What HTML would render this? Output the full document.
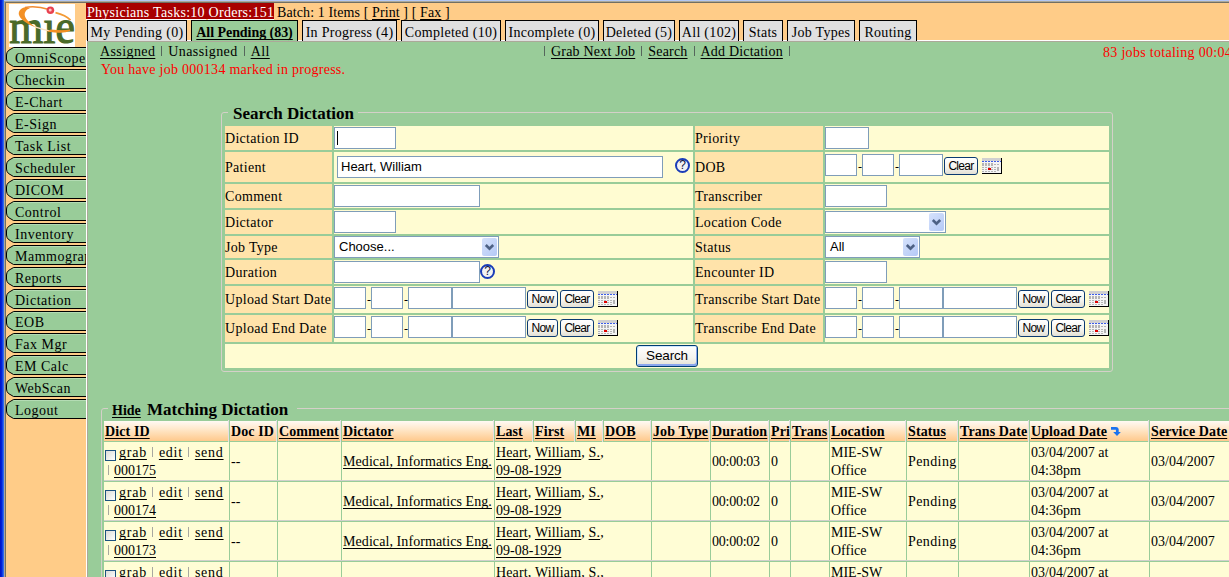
<!DOCTYPE html><html><head><meta charset="utf-8"><style>
html,body{margin:0;padding:0}
body{width:1229px;height:577px;overflow:hidden;position:relative;background:#99CC99;font-family:"Liberation Serif",serif;font-size:14px;color:#000}
body div{position:absolute;box-sizing:border-box}
.t{white-space:nowrap;line-height:18px}
u{text-decoration:underline;text-underline-offset:2px;text-decoration-skip-ink:none}
.sep{display:inline-block;width:1px;height:10px;background:#56665C;vertical-align:0px;margin:0 6px}
.inp{background:#fff;border:1px solid #7F9DB9}
.btn{border:1px solid #0B3A72;border-radius:3px;background:linear-gradient(#FFFFFF 0%,#F4F3EE 60%,#E3E0D4 100%);font-family:"Liberation Sans",sans-serif;font-size:12px;letter-spacing:-0.7px;text-align:center;line-height:16px;color:#000}
.sel{background:#fff;border:1px solid #7F9DB9;font-family:"Liberation Sans",sans-serif;font-size:13px;line-height:20px;padding-left:4px}
.arr{top:1px;right:1px;width:15px;height:18px;border-radius:2px;background:linear-gradient(135deg,#D6E2FC,#B4C9F6)}
.help{width:15px;height:15px;border:2px solid #1B3DB8;border-radius:50%;background:#F2F2F2;font-family:"Liberation Sans",sans-serif;font-size:12px;line-height:11px;text-align:center;color:#0c1440;font-weight:normal}
.lbl{background:#FFE3AA}
.val{background:#FFFCD2}
</style></head><body>
<div style="left:0px;top:0px;width:4px;height:577px;background:linear-gradient(90deg,#0010C4 0%,#0024DC 45%,#3C7EF6 100%)"></div>
<div style="left:4px;top:0px;width:1225px;height:1px;background:#B4C8F4"></div>
<div style="left:4px;top:1px;width:1225px;height:1px;background:#ACA899"></div>
<div style="left:4px;top:1px;width:1px;height:576px;background:#ACA899"></div>
<div style="left:5px;top:2px;width:1224px;height:1px;background:#716F64"></div>
<div style="left:5px;top:2px;width:1px;height:575px;background:#716F64"></div>
<div style="left:6px;top:3px;width:80px;height:574px;background:#FFCC88"></div>
<div style="left:86px;top:3px;width:1143px;height:37px;background:#FFCC88"></div>
<div style="left:86px;top:40px;width:1143px;height:1px;background:#fff"></div>
<div style="left:86px;top:40px;width:1px;height:537px;background:#fff"></div>
<div style="left:87px;top:41px;width:1142px;height:1px;background:#ACA899"></div>
<div style="left:87px;top:41px;width:1px;height:536px;background:#ACA899"></div>
<div style="left:9px;top:4px;width:66px;height:43px;background:#fff;overflow:hidden">
<svg width="66" height="43" viewBox="0 0 66 43">
<text x="0.3" y="39.2" font-family="Liberation Serif" font-size="48" fill="#4A6A28" stroke="#4A6A28" stroke-width="1.2" textLength="65.5" lengthAdjust="spacingAndGlyphs">m&#305;e</text>
<path d="M16 3.2 C11 4.5 8.8 8 10.2 11.5 C12 16 18 20 26.5 23.2 C21.5 19.5 16.5 15.5 15.8 11.5 C15.3 8 17.5 5.2 21 4.2 Z" fill="#F39025"/>
<path d="M16 3.4 C24 2 33 3.2 40 5.5" fill="none" stroke="#F08A30" stroke-width="1.5"/>
<path d="M26 22.8 C32 25 38 26.6 44 27.6" fill="none" stroke="#FBE0C0" stroke-width="1.4"/>
<path d="M40 27.2 C48 28.6 56 28.8 61 26.2 C56 27 48 26.8 42 26.2 Z" fill="#F39025" stroke="#F39025" stroke-width="1.2"/>
<path d="M46.5 8.6 C52 10 58 12.5 61.5 16.2" fill="none" stroke="#F39A35" stroke-width="1.8"/>
<circle cx="41.4" cy="6.3" r="3.8" fill="#E8414F"/>
<circle cx="41.2" cy="6.1" r="1.5" fill="#FFC8C8"/>
</svg></div>
<div style="left:86px;top:3px;width:188px;height:16px;background:#A80000"></div>
<div class="t" style="left:87px;top:4px;"><span style="color:#fff;letter-spacing:0.27px">Physicians Tasks:10 Orders:151</span></div>
<div style="left:86px;top:19px;width:120px;height:1px;background:#fff"></div>
<div style="left:208px;top:19px;width:66px;height:1px;background:#fff"></div>
<div class="t" style="left:277px;top:4px;letter-spacing:0.1px">Batch: 1 Items [ <u>Print</u> ] [ <u>Fax</u> ]</div>
<div style="left:87px;top:20px;width:100px;height:21px;background:#E0E0E0;border:1px solid #000;border-bottom:none;overflow:hidden"><div class="t" style="left:0;width:100%;text-align:center;top:3px;letter-spacing:0.3px">My Pending (0)</div></div>
<div style="left:191px;top:20px;width:107px;height:21px;background:#99CC99;border:1px solid #000;border-bottom:none;overflow:hidden"><div class="t" style="left:0;width:100%;text-align:center;top:3px;letter-spacing:0.3px"><b style="letter-spacing:-0.05px"><u>All Pending (83)</u></b></div></div>
<div style="left:302px;top:20px;width:95px;height:21px;background:#E0E0E0;border:1px solid #000;border-bottom:none;overflow:hidden"><div class="t" style="left:0;width:100%;text-align:center;top:3px;letter-spacing:0.3px">In Progress (4)</div></div>
<div style="left:401px;top:20px;width:100px;height:21px;background:#E0E0E0;border:1px solid #000;border-bottom:none;overflow:hidden"><div class="t" style="left:0;width:100%;text-align:center;top:3px;letter-spacing:0.3px">Completed (10)</div></div>
<div style="left:505px;top:20px;width:94px;height:21px;background:#E0E0E0;border:1px solid #000;border-bottom:none;overflow:hidden"><div class="t" style="left:0;width:100%;text-align:center;top:3px;letter-spacing:0.3px">Incomplete (0)</div></div>
<div style="left:603px;top:20px;width:72px;height:21px;background:#E0E0E0;border:1px solid #000;border-bottom:none;overflow:hidden"><div class="t" style="left:0;width:100%;text-align:center;top:3px;letter-spacing:0.3px">Deleted (5)</div></div>
<div style="left:679px;top:20px;width:60px;height:21px;background:#E0E0E0;border:1px solid #000;border-bottom:none;overflow:hidden"><div class="t" style="left:0;width:100%;text-align:center;top:3px;letter-spacing:0.3px">All (102)</div></div>
<div style="left:743px;top:20px;width:40px;height:21px;background:#E0E0E0;border:1px solid #000;border-bottom:none;overflow:hidden"><div class="t" style="left:0;width:100%;text-align:center;top:3px;letter-spacing:0.3px">Stats</div></div>
<div style="left:787px;top:20px;width:68px;height:21px;background:#E0E0E0;border:1px solid #000;border-bottom:none;overflow:hidden"><div class="t" style="left:0;width:100%;text-align:center;top:3px;letter-spacing:0.3px">Job Types</div></div>
<div style="left:859px;top:20px;width:58px;height:21px;background:#E0E0E0;border:1px solid #000;border-bottom:none;overflow:hidden"><div class="t" style="left:0;width:100%;text-align:center;top:3px;letter-spacing:0.3px">Routing</div></div>
<div style="left:6px;top:47px;width:80px;height:20px;overflow:hidden"><svg width="80" height="20" style="position:absolute;left:0;top:0"><path d="M80 0.5 H7.5 L2.5 3.5 Q0.5 5.5 0.5 8 V12 Q0.5 14.5 2.5 16.5 L7.5 19.5 H80" fill="#99CC99" stroke="#000" stroke-width="1"/><path d="M8 1.5 H80" stroke="#B4DCB4" stroke-width="1"/></svg><div class="t" style="left:9px;top:3px;letter-spacing:0.5px">OmniScope</div></div>
<div style="left:6px;top:69px;width:80px;height:20px;overflow:hidden"><svg width="80" height="20" style="position:absolute;left:0;top:0"><path d="M80 0.5 H7.5 L2.5 3.5 Q0.5 5.5 0.5 8 V12 Q0.5 14.5 2.5 16.5 L7.5 19.5 H80" fill="#99CC99" stroke="#000" stroke-width="1"/><path d="M8 1.5 H80" stroke="#B4DCB4" stroke-width="1"/></svg><div class="t" style="left:9px;top:3px;letter-spacing:0.5px">Checkin</div></div>
<div style="left:6px;top:91px;width:80px;height:20px;overflow:hidden"><svg width="80" height="20" style="position:absolute;left:0;top:0"><path d="M80 0.5 H7.5 L2.5 3.5 Q0.5 5.5 0.5 8 V12 Q0.5 14.5 2.5 16.5 L7.5 19.5 H80" fill="#99CC99" stroke="#000" stroke-width="1"/><path d="M8 1.5 H80" stroke="#B4DCB4" stroke-width="1"/></svg><div class="t" style="left:9px;top:3px;letter-spacing:0.5px">E-Chart</div></div>
<div style="left:6px;top:113px;width:80px;height:20px;overflow:hidden"><svg width="80" height="20" style="position:absolute;left:0;top:0"><path d="M80 0.5 H7.5 L2.5 3.5 Q0.5 5.5 0.5 8 V12 Q0.5 14.5 2.5 16.5 L7.5 19.5 H80" fill="#99CC99" stroke="#000" stroke-width="1"/><path d="M8 1.5 H80" stroke="#B4DCB4" stroke-width="1"/></svg><div class="t" style="left:9px;top:3px;letter-spacing:0.5px">E-Sign</div></div>
<div style="left:6px;top:135px;width:80px;height:20px;overflow:hidden"><svg width="80" height="20" style="position:absolute;left:0;top:0"><path d="M80 0.5 H7.5 L2.5 3.5 Q0.5 5.5 0.5 8 V12 Q0.5 14.5 2.5 16.5 L7.5 19.5 H80" fill="#99CC99" stroke="#000" stroke-width="1"/><path d="M8 1.5 H80" stroke="#B4DCB4" stroke-width="1"/></svg><div class="t" style="left:9px;top:3px;letter-spacing:0.5px">Task List</div></div>
<div style="left:6px;top:157px;width:80px;height:20px;overflow:hidden"><svg width="80" height="20" style="position:absolute;left:0;top:0"><path d="M80 0.5 H7.5 L2.5 3.5 Q0.5 5.5 0.5 8 V12 Q0.5 14.5 2.5 16.5 L7.5 19.5 H80" fill="#99CC99" stroke="#000" stroke-width="1"/><path d="M8 1.5 H80" stroke="#B4DCB4" stroke-width="1"/></svg><div class="t" style="left:9px;top:3px;letter-spacing:0.5px">Scheduler</div></div>
<div style="left:6px;top:179px;width:80px;height:20px;overflow:hidden"><svg width="80" height="20" style="position:absolute;left:0;top:0"><path d="M80 0.5 H7.5 L2.5 3.5 Q0.5 5.5 0.5 8 V12 Q0.5 14.5 2.5 16.5 L7.5 19.5 H80" fill="#99CC99" stroke="#000" stroke-width="1"/><path d="M8 1.5 H80" stroke="#B4DCB4" stroke-width="1"/></svg><div class="t" style="left:9px;top:3px;letter-spacing:0.5px">DICOM</div></div>
<div style="left:6px;top:201px;width:80px;height:20px;overflow:hidden"><svg width="80" height="20" style="position:absolute;left:0;top:0"><path d="M80 0.5 H7.5 L2.5 3.5 Q0.5 5.5 0.5 8 V12 Q0.5 14.5 2.5 16.5 L7.5 19.5 H80" fill="#99CC99" stroke="#000" stroke-width="1"/><path d="M8 1.5 H80" stroke="#B4DCB4" stroke-width="1"/></svg><div class="t" style="left:9px;top:3px;letter-spacing:0.5px">Control</div></div>
<div style="left:6px;top:223px;width:80px;height:20px;overflow:hidden"><svg width="80" height="20" style="position:absolute;left:0;top:0"><path d="M80 0.5 H7.5 L2.5 3.5 Q0.5 5.5 0.5 8 V12 Q0.5 14.5 2.5 16.5 L7.5 19.5 H80" fill="#99CC99" stroke="#000" stroke-width="1"/><path d="M8 1.5 H80" stroke="#B4DCB4" stroke-width="1"/></svg><div class="t" style="left:9px;top:3px;letter-spacing:0.5px">Inventory</div></div>
<div style="left:6px;top:245px;width:80px;height:20px;overflow:hidden"><svg width="80" height="20" style="position:absolute;left:0;top:0"><path d="M80 0.5 H7.5 L2.5 3.5 Q0.5 5.5 0.5 8 V12 Q0.5 14.5 2.5 16.5 L7.5 19.5 H80" fill="#99CC99" stroke="#000" stroke-width="1"/><path d="M8 1.5 H80" stroke="#B4DCB4" stroke-width="1"/></svg><div class="t" style="left:9px;top:3px;letter-spacing:0.5px">Mammography</div></div>
<div style="left:6px;top:267px;width:80px;height:20px;overflow:hidden"><svg width="80" height="20" style="position:absolute;left:0;top:0"><path d="M80 0.5 H7.5 L2.5 3.5 Q0.5 5.5 0.5 8 V12 Q0.5 14.5 2.5 16.5 L7.5 19.5 H80" fill="#99CC99" stroke="#000" stroke-width="1"/><path d="M8 1.5 H80" stroke="#B4DCB4" stroke-width="1"/></svg><div class="t" style="left:9px;top:3px;letter-spacing:0.5px">Reports</div></div>
<div style="left:6px;top:289px;width:80px;height:20px;overflow:hidden"><svg width="80" height="20" style="position:absolute;left:0;top:0"><path d="M80 0.5 H7.5 L2.5 3.5 Q0.5 5.5 0.5 8 V12 Q0.5 14.5 2.5 16.5 L7.5 19.5 H80" fill="#99CC99" stroke="#000" stroke-width="1"/><path d="M8 1.5 H80" stroke="#B4DCB4" stroke-width="1"/></svg><div class="t" style="left:9px;top:3px;letter-spacing:0.5px">Dictation</div></div>
<div style="left:6px;top:311px;width:80px;height:20px;overflow:hidden"><svg width="80" height="20" style="position:absolute;left:0;top:0"><path d="M80 0.5 H7.5 L2.5 3.5 Q0.5 5.5 0.5 8 V12 Q0.5 14.5 2.5 16.5 L7.5 19.5 H80" fill="#99CC99" stroke="#000" stroke-width="1"/><path d="M8 1.5 H80" stroke="#B4DCB4" stroke-width="1"/></svg><div class="t" style="left:9px;top:3px;letter-spacing:0.5px">EOB</div></div>
<div style="left:6px;top:333px;width:80px;height:20px;overflow:hidden"><svg width="80" height="20" style="position:absolute;left:0;top:0"><path d="M80 0.5 H7.5 L2.5 3.5 Q0.5 5.5 0.5 8 V12 Q0.5 14.5 2.5 16.5 L7.5 19.5 H80" fill="#99CC99" stroke="#000" stroke-width="1"/><path d="M8 1.5 H80" stroke="#B4DCB4" stroke-width="1"/></svg><div class="t" style="left:9px;top:3px;letter-spacing:0.5px">Fax Mgr</div></div>
<div style="left:6px;top:355px;width:80px;height:20px;overflow:hidden"><svg width="80" height="20" style="position:absolute;left:0;top:0"><path d="M80 0.5 H7.5 L2.5 3.5 Q0.5 5.5 0.5 8 V12 Q0.5 14.5 2.5 16.5 L7.5 19.5 H80" fill="#99CC99" stroke="#000" stroke-width="1"/><path d="M8 1.5 H80" stroke="#B4DCB4" stroke-width="1"/></svg><div class="t" style="left:9px;top:3px;letter-spacing:0.5px">EM Calc</div></div>
<div style="left:6px;top:377px;width:80px;height:20px;overflow:hidden"><svg width="80" height="20" style="position:absolute;left:0;top:0"><path d="M80 0.5 H7.5 L2.5 3.5 Q0.5 5.5 0.5 8 V12 Q0.5 14.5 2.5 16.5 L7.5 19.5 H80" fill="#99CC99" stroke="#000" stroke-width="1"/><path d="M8 1.5 H80" stroke="#B4DCB4" stroke-width="1"/></svg><div class="t" style="left:9px;top:3px;letter-spacing:0.5px">WebScan</div></div>
<div style="left:6px;top:399px;width:80px;height:20px;overflow:hidden"><svg width="80" height="20" style="position:absolute;left:0;top:0"><path d="M80 0.5 H7.5 L2.5 3.5 Q0.5 5.5 0.5 8 V12 Q0.5 14.5 2.5 16.5 L7.5 19.5 H80" fill="#99CC99" stroke="#000" stroke-width="1"/><path d="M8 1.5 H80" stroke="#B4DCB4" stroke-width="1"/></svg><div class="t" style="left:9px;top:3px;letter-spacing:0.5px">Logout</div></div>
<div style="left:86px;top:42px;width:1px;height:535px;background:#fff"></div>
<div class="t" style="left:100px;top:43px;letter-spacing:0.4px"><u>Assigned</u><span class="sep"></span>Unassigned<span class="sep"></span><u>All</u></div>
<div class="t" style="left:101px;top:61px;color:#FF0000;letter-spacing:0.27px">You have job 000134 marked in progress.</div>
<div class="t" style="left:544px;top:43px;letter-spacing:0.2px"><span class="sep" style="margin-left:0"></span><u>Grab Next Job</u><span class="sep"></span><u>Search</u><span class="sep"></span><u>Add Dictation</u><span class="sep"></span></div>
<div class="t" style="left:1103px;top:44px;color:#FF0000;letter-spacing:0.3px">83 jobs totaling 00:04:41</div>
<div style="left:221px;top:112px;width:892px;height:260px;border:1px solid #D4D0C8;border-radius:3px"></div>
<div style="left:228px;top:104px;width:130px;height:18px;background:#99CC99"></div>
<div class="t" style="left:233px;top:104px;font-size:17px;line-height:20px"><b>Search Dictation</b></div>
<div class="lbl" style="left:225px;top:126px;width:107px;height:24px"></div>
<div class="val" style="left:334px;top:126px;width:359px;height:24px"></div>
<div class="lbl" style="left:695px;top:126px;width:128px;height:24px"></div>
<div class="val" style="left:825px;top:126px;width:284px;height:24px"></div>
<div class="t" style="left:225px;top:130px;letter-spacing:0.3px">Dictation ID</div>
<div class="t" style="left:695px;top:130px;letter-spacing:0.3px">Priority</div>
<div class="lbl" style="left:225px;top:152px;width:107px;height:30px"></div>
<div class="val" style="left:334px;top:152px;width:359px;height:30px"></div>
<div class="lbl" style="left:695px;top:152px;width:128px;height:30px"></div>
<div class="val" style="left:825px;top:152px;width:284px;height:30px"></div>
<div class="t" style="left:225px;top:159px;letter-spacing:0.3px">Patient</div>
<div class="t" style="left:695px;top:159px;letter-spacing:0.3px">DOB</div>
<div class="lbl" style="left:225px;top:184px;width:107px;height:24px"></div>
<div class="val" style="left:334px;top:184px;width:359px;height:24px"></div>
<div class="lbl" style="left:695px;top:184px;width:128px;height:24px"></div>
<div class="val" style="left:825px;top:184px;width:284px;height:24px"></div>
<div class="t" style="left:225px;top:188px;letter-spacing:0.3px">Comment</div>
<div class="t" style="left:695px;top:188px;letter-spacing:0.3px">Transcriber</div>
<div class="lbl" style="left:225px;top:210px;width:107px;height:24px"></div>
<div class="val" style="left:334px;top:210px;width:359px;height:24px"></div>
<div class="lbl" style="left:695px;top:210px;width:128px;height:24px"></div>
<div class="val" style="left:825px;top:210px;width:284px;height:24px"></div>
<div class="t" style="left:225px;top:214px;letter-spacing:0.3px">Dictator</div>
<div class="t" style="left:695px;top:214px;letter-spacing:0.3px">Location Code</div>
<div class="lbl" style="left:225px;top:236px;width:107px;height:22px"></div>
<div class="val" style="left:334px;top:236px;width:359px;height:22px"></div>
<div class="lbl" style="left:695px;top:236px;width:128px;height:22px"></div>
<div class="val" style="left:825px;top:236px;width:284px;height:22px"></div>
<div class="t" style="left:225px;top:239px;letter-spacing:0.3px">Job Type</div>
<div class="t" style="left:695px;top:239px;letter-spacing:0.3px">Status</div>
<div class="lbl" style="left:225px;top:260px;width:107px;height:24px"></div>
<div class="val" style="left:334px;top:260px;width:359px;height:24px"></div>
<div class="lbl" style="left:695px;top:260px;width:128px;height:24px"></div>
<div class="val" style="left:825px;top:260px;width:284px;height:24px"></div>
<div class="t" style="left:225px;top:264px;letter-spacing:0.3px">Duration</div>
<div class="t" style="left:695px;top:264px;letter-spacing:0.3px">Encounter ID</div>
<div class="lbl" style="left:225px;top:286px;width:107px;height:27px"></div>
<div class="val" style="left:334px;top:286px;width:359px;height:27px"></div>
<div class="lbl" style="left:695px;top:286px;width:128px;height:27px"></div>
<div class="val" style="left:825px;top:286px;width:284px;height:27px"></div>
<div class="t" style="left:225px;top:291px;letter-spacing:0.3px">Upload Start Date</div>
<div class="t" style="left:695px;top:291px;letter-spacing:0.3px">Transcribe Start Date</div>
<div class="lbl" style="left:225px;top:315px;width:107px;height:27px"></div>
<div class="val" style="left:334px;top:315px;width:359px;height:27px"></div>
<div class="lbl" style="left:695px;top:315px;width:128px;height:27px"></div>
<div class="val" style="left:825px;top:315px;width:284px;height:27px"></div>
<div class="t" style="left:225px;top:320px;letter-spacing:0.3px">Upload End Date</div>
<div class="t" style="left:695px;top:320px;letter-spacing:0.3px">Transcribe End Date</div>
<div class="val" style="left:225px;top:344px;width:884px;height:24px"></div>
<div class="inp" style="left:334px;top:127px;width:62px;height:22px"><div style="left:2px;top:3px;width:1px;height:14px;background:#000"></div></div>
<div class="inp" style="left:337px;top:156px;width:326px;height:22px"><div class="t" style="left:3px;top:1px;font-family:'Liberation Sans',sans-serif;font-size:13px;color:#000">Heart, William</div></div>
<div class="help" style="left:675.0px;top:158.0px">?</div>
<div class="inp" style="left:334px;top:185px;width:146px;height:22px"></div>
<div class="inp" style="left:334px;top:211px;width:62px;height:22px"></div>
<div class="sel" style="left:334px;top:236px;width:165px;height:22px">Choose...<div class="arr"><svg width="15" height="18" viewBox="0 0 15 18"><path d="M3.8 7 L7.5 10.7 L11.2 7" fill="none" stroke="#4D6185" stroke-width="2.6"/></svg></div></div>
<div class="inp" style="left:334px;top:261px;width:146px;height:22px"></div>
<div class="help" style="left:480.0px;top:264.0px">?</div>
<div class="inp" style="left:334px;top:287px;width:32px;height:22px"></div>
<div class="t" style="left:367px;top:291px;font-size:12px">-</div>
<div class="inp" style="left:371px;top:287px;width:32px;height:22px"></div>
<div class="t" style="left:404px;top:291px;font-size:12px">-</div>
<div class="inp" style="left:408px;top:287px;width:44px;height:22px"></div>
<div class="inp" style="left:452px;top:287px;width:74px;height:22px"></div>
<div class="btn" style="left:527px;top:290px;width:31px;height:18px">Now</div>
<div class="btn" style="left:560px;top:290px;width:34px;height:18px">Clear</div>
<div style="left:598px;top:291px;width:20px;height:16px"><svg width="20" height="16" viewBox="0 0 20 16" shape-rendering="crispEdges">
<rect x="0" y="0" width="19" height="15" fill="#F4F4F4"/>
<rect x="0" y="0" width="19" height="3" fill="#D0D0D0"/>
<g fill="#3C5CE8"><rect x="0" y="3" width="2" height="1"/><rect x="3" y="3" width="2" height="1"/><rect x="6" y="3" width="2" height="1"/><rect x="9" y="3" width="2" height="1"/><rect x="12" y="3" width="2" height="1"/><rect x="15" y="3" width="2" height="1"/><rect x="18" y="3" width="1" height="1"/></g>
<g fill="#B4B4B4"><rect x="0" y="5" width="2" height="3"/><rect x="3" y="5" width="2" height="3"/><rect x="6" y="5" width="2" height="3"/><rect x="9" y="5" width="2" height="3"/>
<rect x="12" y="6" width="2" height="1"/><rect x="15" y="6" width="2" height="1"/>
<rect x="0" y="9" width="2" height="1"/><rect x="3" y="9" width="2" height="1"/><rect x="6" y="9" width="2" height="1"/><rect x="9" y="9" width="2" height="1"/><rect x="12" y="9" width="2" height="1"/><rect x="15" y="9" width="2" height="1"/>
<rect x="0" y="11" width="2" height="1"/><rect x="3" y="11" width="2" height="1"/><rect x="9" y="11" width="2" height="1"/><rect x="12" y="11" width="2" height="1"/><rect x="15" y="10" width="2" height="3"/>
<rect x="0" y="13" width="2" height="1"/><rect x="3" y="13" width="2" height="1"/><rect x="6" y="13" width="2" height="1"/><rect x="9" y="13" width="2" height="1"/><rect x="12" y="13" width="2" height="1"/></g>
<rect x="6" y="10" width="3" height="2" fill="#E00000"/>
<rect x="19" y="0" width="1" height="16" fill="#000"/><rect x="0" y="15" width="20" height="1" fill="#000"/>
</svg></div>
<div class="inp" style="left:334px;top:316px;width:32px;height:22px"></div>
<div class="t" style="left:367px;top:320px;font-size:12px">-</div>
<div class="inp" style="left:371px;top:316px;width:32px;height:22px"></div>
<div class="t" style="left:404px;top:320px;font-size:12px">-</div>
<div class="inp" style="left:408px;top:316px;width:44px;height:22px"></div>
<div class="inp" style="left:452px;top:316px;width:74px;height:22px"></div>
<div class="btn" style="left:527px;top:319px;width:31px;height:18px">Now</div>
<div class="btn" style="left:560px;top:319px;width:34px;height:18px">Clear</div>
<div style="left:598px;top:320px;width:20px;height:16px"><svg width="20" height="16" viewBox="0 0 20 16" shape-rendering="crispEdges">
<rect x="0" y="0" width="19" height="15" fill="#F4F4F4"/>
<rect x="0" y="0" width="19" height="3" fill="#D0D0D0"/>
<g fill="#3C5CE8"><rect x="0" y="3" width="2" height="1"/><rect x="3" y="3" width="2" height="1"/><rect x="6" y="3" width="2" height="1"/><rect x="9" y="3" width="2" height="1"/><rect x="12" y="3" width="2" height="1"/><rect x="15" y="3" width="2" height="1"/><rect x="18" y="3" width="1" height="1"/></g>
<g fill="#B4B4B4"><rect x="0" y="5" width="2" height="3"/><rect x="3" y="5" width="2" height="3"/><rect x="6" y="5" width="2" height="3"/><rect x="9" y="5" width="2" height="3"/>
<rect x="12" y="6" width="2" height="1"/><rect x="15" y="6" width="2" height="1"/>
<rect x="0" y="9" width="2" height="1"/><rect x="3" y="9" width="2" height="1"/><rect x="6" y="9" width="2" height="1"/><rect x="9" y="9" width="2" height="1"/><rect x="12" y="9" width="2" height="1"/><rect x="15" y="9" width="2" height="1"/>
<rect x="0" y="11" width="2" height="1"/><rect x="3" y="11" width="2" height="1"/><rect x="9" y="11" width="2" height="1"/><rect x="12" y="11" width="2" height="1"/><rect x="15" y="10" width="2" height="3"/>
<rect x="0" y="13" width="2" height="1"/><rect x="3" y="13" width="2" height="1"/><rect x="6" y="13" width="2" height="1"/><rect x="9" y="13" width="2" height="1"/><rect x="12" y="13" width="2" height="1"/></g>
<rect x="6" y="10" width="3" height="2" fill="#E00000"/>
<rect x="19" y="0" width="1" height="16" fill="#000"/><rect x="0" y="15" width="20" height="1" fill="#000"/>
</svg></div>
<div class="inp" style="left:825px;top:127px;width:44px;height:22px"></div>
<div class="inp" style="left:825px;top:154px;width:32px;height:22px"></div>
<div class="t" style="left:858px;top:158px;font-size:12px">-</div>
<div class="inp" style="left:862px;top:154px;width:32px;height:22px"></div>
<div class="t" style="left:895px;top:158px;font-size:12px">-</div>
<div class="inp" style="left:899px;top:154px;width:44px;height:22px"></div>
<div class="btn" style="left:944px;top:157px;width:34px;height:18px">Clear</div>
<div style="left:982px;top:158px;width:20px;height:16px"><svg width="20" height="16" viewBox="0 0 20 16" shape-rendering="crispEdges">
<rect x="0" y="0" width="19" height="15" fill="#F4F4F4"/>
<rect x="0" y="0" width="19" height="3" fill="#D0D0D0"/>
<g fill="#3C5CE8"><rect x="0" y="3" width="2" height="1"/><rect x="3" y="3" width="2" height="1"/><rect x="6" y="3" width="2" height="1"/><rect x="9" y="3" width="2" height="1"/><rect x="12" y="3" width="2" height="1"/><rect x="15" y="3" width="2" height="1"/><rect x="18" y="3" width="1" height="1"/></g>
<g fill="#B4B4B4"><rect x="0" y="5" width="2" height="3"/><rect x="3" y="5" width="2" height="3"/><rect x="6" y="5" width="2" height="3"/><rect x="9" y="5" width="2" height="3"/>
<rect x="12" y="6" width="2" height="1"/><rect x="15" y="6" width="2" height="1"/>
<rect x="0" y="9" width="2" height="1"/><rect x="3" y="9" width="2" height="1"/><rect x="6" y="9" width="2" height="1"/><rect x="9" y="9" width="2" height="1"/><rect x="12" y="9" width="2" height="1"/><rect x="15" y="9" width="2" height="1"/>
<rect x="0" y="11" width="2" height="1"/><rect x="3" y="11" width="2" height="1"/><rect x="9" y="11" width="2" height="1"/><rect x="12" y="11" width="2" height="1"/><rect x="15" y="10" width="2" height="3"/>
<rect x="0" y="13" width="2" height="1"/><rect x="3" y="13" width="2" height="1"/><rect x="6" y="13" width="2" height="1"/><rect x="9" y="13" width="2" height="1"/><rect x="12" y="13" width="2" height="1"/></g>
<rect x="6" y="10" width="3" height="2" fill="#E00000"/>
<rect x="19" y="0" width="1" height="16" fill="#000"/><rect x="0" y="15" width="20" height="1" fill="#000"/>
</svg></div>
<div class="inp" style="left:825px;top:185px;width:62px;height:22px"></div>
<div class="sel" style="left:825px;top:211px;width:121px;height:22px"><div class="arr"><svg width="15" height="18" viewBox="0 0 15 18"><path d="M3.8 7 L7.5 10.7 L11.2 7" fill="none" stroke="#4D6185" stroke-width="2.6"/></svg></div></div>
<div class="sel" style="left:825px;top:236px;width:95px;height:22px">All<div class="arr"><svg width="15" height="18" viewBox="0 0 15 18"><path d="M3.8 7 L7.5 10.7 L11.2 7" fill="none" stroke="#4D6185" stroke-width="2.6"/></svg></div></div>
<div class="inp" style="left:825px;top:261px;width:62px;height:22px"></div>
<div class="inp" style="left:825px;top:287px;width:32px;height:22px"></div>
<div class="t" style="left:858px;top:291px;font-size:12px">-</div>
<div class="inp" style="left:862px;top:287px;width:32px;height:22px"></div>
<div class="t" style="left:895px;top:291px;font-size:12px">-</div>
<div class="inp" style="left:899px;top:287px;width:44px;height:22px"></div>
<div class="inp" style="left:943px;top:287px;width:74px;height:22px"></div>
<div class="btn" style="left:1018px;top:290px;width:31px;height:18px">Now</div>
<div class="btn" style="left:1051px;top:290px;width:34px;height:18px">Clear</div>
<div style="left:1089px;top:291px;width:20px;height:16px"><svg width="20" height="16" viewBox="0 0 20 16" shape-rendering="crispEdges">
<rect x="0" y="0" width="19" height="15" fill="#F4F4F4"/>
<rect x="0" y="0" width="19" height="3" fill="#D0D0D0"/>
<g fill="#3C5CE8"><rect x="0" y="3" width="2" height="1"/><rect x="3" y="3" width="2" height="1"/><rect x="6" y="3" width="2" height="1"/><rect x="9" y="3" width="2" height="1"/><rect x="12" y="3" width="2" height="1"/><rect x="15" y="3" width="2" height="1"/><rect x="18" y="3" width="1" height="1"/></g>
<g fill="#B4B4B4"><rect x="0" y="5" width="2" height="3"/><rect x="3" y="5" width="2" height="3"/><rect x="6" y="5" width="2" height="3"/><rect x="9" y="5" width="2" height="3"/>
<rect x="12" y="6" width="2" height="1"/><rect x="15" y="6" width="2" height="1"/>
<rect x="0" y="9" width="2" height="1"/><rect x="3" y="9" width="2" height="1"/><rect x="6" y="9" width="2" height="1"/><rect x="9" y="9" width="2" height="1"/><rect x="12" y="9" width="2" height="1"/><rect x="15" y="9" width="2" height="1"/>
<rect x="0" y="11" width="2" height="1"/><rect x="3" y="11" width="2" height="1"/><rect x="9" y="11" width="2" height="1"/><rect x="12" y="11" width="2" height="1"/><rect x="15" y="10" width="2" height="3"/>
<rect x="0" y="13" width="2" height="1"/><rect x="3" y="13" width="2" height="1"/><rect x="6" y="13" width="2" height="1"/><rect x="9" y="13" width="2" height="1"/><rect x="12" y="13" width="2" height="1"/></g>
<rect x="6" y="10" width="3" height="2" fill="#E00000"/>
<rect x="19" y="0" width="1" height="16" fill="#000"/><rect x="0" y="15" width="20" height="1" fill="#000"/>
</svg></div>
<div class="inp" style="left:825px;top:316px;width:32px;height:22px"></div>
<div class="t" style="left:858px;top:320px;font-size:12px">-</div>
<div class="inp" style="left:862px;top:316px;width:32px;height:22px"></div>
<div class="t" style="left:895px;top:320px;font-size:12px">-</div>
<div class="inp" style="left:899px;top:316px;width:44px;height:22px"></div>
<div class="inp" style="left:943px;top:316px;width:74px;height:22px"></div>
<div class="btn" style="left:1018px;top:319px;width:31px;height:18px">Now</div>
<div class="btn" style="left:1051px;top:319px;width:34px;height:18px">Clear</div>
<div style="left:1089px;top:320px;width:20px;height:16px"><svg width="20" height="16" viewBox="0 0 20 16" shape-rendering="crispEdges">
<rect x="0" y="0" width="19" height="15" fill="#F4F4F4"/>
<rect x="0" y="0" width="19" height="3" fill="#D0D0D0"/>
<g fill="#3C5CE8"><rect x="0" y="3" width="2" height="1"/><rect x="3" y="3" width="2" height="1"/><rect x="6" y="3" width="2" height="1"/><rect x="9" y="3" width="2" height="1"/><rect x="12" y="3" width="2" height="1"/><rect x="15" y="3" width="2" height="1"/><rect x="18" y="3" width="1" height="1"/></g>
<g fill="#B4B4B4"><rect x="0" y="5" width="2" height="3"/><rect x="3" y="5" width="2" height="3"/><rect x="6" y="5" width="2" height="3"/><rect x="9" y="5" width="2" height="3"/>
<rect x="12" y="6" width="2" height="1"/><rect x="15" y="6" width="2" height="1"/>
<rect x="0" y="9" width="2" height="1"/><rect x="3" y="9" width="2" height="1"/><rect x="6" y="9" width="2" height="1"/><rect x="9" y="9" width="2" height="1"/><rect x="12" y="9" width="2" height="1"/><rect x="15" y="9" width="2" height="1"/>
<rect x="0" y="11" width="2" height="1"/><rect x="3" y="11" width="2" height="1"/><rect x="9" y="11" width="2" height="1"/><rect x="12" y="11" width="2" height="1"/><rect x="15" y="10" width="2" height="3"/>
<rect x="0" y="13" width="2" height="1"/><rect x="3" y="13" width="2" height="1"/><rect x="6" y="13" width="2" height="1"/><rect x="9" y="13" width="2" height="1"/><rect x="12" y="13" width="2" height="1"/></g>
<rect x="6" y="10" width="3" height="2" fill="#E00000"/>
<rect x="19" y="0" width="1" height="16" fill="#000"/><rect x="0" y="15" width="20" height="1" fill="#000"/>
</svg></div>
<div class="btn" style="font-size:13.5px;letter-spacing:-0.15px;line-height:20px;border-color:#003C74;box-shadow:inset 1px 1px 0 #CEE7FF,inset -1px -2px 0 #8AA6EE;left:636px;top:345px;width:62px;height:22px">Search</div>
<div style="left:101px;top:408px;width:1200px;height:300px;border:1px solid #D4D0C8;border-radius:3px"></div>
<div style="left:108px;top:400px;width:189px;height:16px;background:#99CC99"></div>
<div class="t" style="left:112px;top:402px;"><b><u>Hide</u></b></div>
<div class="t" style="left:147px;top:400px;font-size:17px;line-height:20px"><b>Matching Dictation</b></div>
<div style="left:104px;top:421px;width:125px;height:20px;background:linear-gradient(#FFFAF4,#FFE6C6 45%,#FFC98C)"></div>
<div style="left:228px;top:420px;width:1px;height:22px;background:#E4E0E4"></div>
<div class="t" style="left:105px;top:423px;letter-spacing:0.1px"><b><u>Dict ID</u></b></div>
<div style="left:230px;top:421px;width:47px;height:20px;background:linear-gradient(#FFFAF4,#FFE6C6 45%,#FFC98C)"></div>
<div style="left:276px;top:420px;width:1px;height:22px;background:#E4E0E4"></div>
<div class="t" style="left:231px;top:423px;letter-spacing:0.1px"><b>Doc ID</b></div>
<div style="left:278px;top:421px;width:63px;height:20px;background:linear-gradient(#FFFAF4,#FFE6C6 45%,#FFC98C)"></div>
<div style="left:340px;top:420px;width:1px;height:22px;background:#E4E0E4"></div>
<div class="t" style="left:279px;top:423px;letter-spacing:0.1px"><b><u>Comment</u></b></div>
<div style="left:342px;top:421px;width:152px;height:20px;background:linear-gradient(#FFFAF4,#FFE6C6 45%,#FFC98C)"></div>
<div style="left:493px;top:420px;width:1px;height:22px;background:#E4E0E4"></div>
<div class="t" style="left:343px;top:423px;letter-spacing:0.1px"><b><u>Dictator</u></b></div>
<div style="left:495px;top:421px;width:38px;height:20px;background:linear-gradient(#FFFAF4,#FFE6C6 45%,#FFC98C)"></div>
<div style="left:532px;top:420px;width:1px;height:22px;background:#E4E0E4"></div>
<div class="t" style="left:496px;top:423px;letter-spacing:0.1px"><b><u>Last</u></b></div>
<div style="left:534px;top:421px;width:41px;height:20px;background:linear-gradient(#FFFAF4,#FFE6C6 45%,#FFC98C)"></div>
<div style="left:574px;top:420px;width:1px;height:22px;background:#E4E0E4"></div>
<div class="t" style="left:535px;top:423px;letter-spacing:0.1px"><b><u>First</u></b></div>
<div style="left:576px;top:421px;width:27px;height:20px;background:linear-gradient(#FFFAF4,#FFE6C6 45%,#FFC98C)"></div>
<div style="left:602px;top:420px;width:1px;height:22px;background:#E4E0E4"></div>
<div class="t" style="left:577px;top:423px;letter-spacing:0.1px"><b><u>MI</u></b></div>
<div style="left:604px;top:421px;width:47px;height:20px;background:linear-gradient(#FFFAF4,#FFE6C6 45%,#FFC98C)"></div>
<div style="left:650px;top:420px;width:1px;height:22px;background:#E4E0E4"></div>
<div class="t" style="left:605px;top:423px;letter-spacing:0.1px"><b><u>DOB</u></b></div>
<div style="left:652px;top:421px;width:58px;height:20px;background:linear-gradient(#FFFAF4,#FFE6C6 45%,#FFC98C)"></div>
<div style="left:709px;top:420px;width:1px;height:22px;background:#E4E0E4"></div>
<div class="t" style="left:653px;top:423px;letter-spacing:0.1px"><b><u>Job Type</u></b></div>
<div style="left:711px;top:421px;width:58px;height:20px;background:linear-gradient(#FFFAF4,#FFE6C6 45%,#FFC98C)"></div>
<div style="left:768px;top:420px;width:1px;height:22px;background:#E4E0E4"></div>
<div class="t" style="left:712px;top:423px;letter-spacing:0.1px"><b><u>Duration</u></b></div>
<div style="left:770px;top:421px;width:20px;height:20px;background:linear-gradient(#FFFAF4,#FFE6C6 45%,#FFC98C)"></div>
<div style="left:789px;top:420px;width:1px;height:22px;background:#E4E0E4"></div>
<div class="t" style="left:771px;top:423px;letter-spacing:0.1px"><b><u>Pri</u></b></div>
<div style="left:791px;top:421px;width:38px;height:20px;background:linear-gradient(#FFFAF4,#FFE6C6 45%,#FFC98C)"></div>
<div style="left:828px;top:420px;width:1px;height:22px;background:#E4E0E4"></div>
<div class="t" style="left:792px;top:423px;letter-spacing:0.1px"><b><u>Trans</u></b></div>
<div style="left:830px;top:421px;width:76px;height:20px;background:linear-gradient(#FFFAF4,#FFE6C6 45%,#FFC98C)"></div>
<div style="left:905px;top:420px;width:1px;height:22px;background:#E4E0E4"></div>
<div class="t" style="left:831px;top:423px;letter-spacing:0.1px"><b><u>Location</u></b></div>
<div style="left:907px;top:421px;width:51px;height:20px;background:linear-gradient(#FFFAF4,#FFE6C6 45%,#FFC98C)"></div>
<div style="left:957px;top:420px;width:1px;height:22px;background:#E4E0E4"></div>
<div class="t" style="left:908px;top:423px;letter-spacing:0.1px"><b><u>Status</u></b></div>
<div style="left:959px;top:421px;width:70px;height:20px;background:linear-gradient(#FFFAF4,#FFE6C6 45%,#FFC98C)"></div>
<div style="left:1028px;top:420px;width:1px;height:22px;background:#E4E0E4"></div>
<div class="t" style="left:960px;top:423px;letter-spacing:0.1px"><b><u>Trans Date</u></b></div>
<div style="left:1030px;top:421px;width:119px;height:20px;background:linear-gradient(#FFFAF4,#FFE6C6 45%,#FFC98C)"></div>
<div style="left:1148px;top:420px;width:1px;height:22px;background:#E4E0E4"></div>
<div class="t" style="left:1031px;top:423px;letter-spacing:0.1px"><b><u>Upload Date</u></b></div>
<div style="left:1150px;top:421px;width:151px;height:20px;background:linear-gradient(#FFFAF4,#FFE6C6 45%,#FFC98C)"></div>
<div style="left:1300px;top:420px;width:1px;height:22px;background:#E4E0E4"></div>
<div class="t" style="left:1151px;top:423px;letter-spacing:0.1px"><b><u>Service Date</u></b></div>
<div style="left:1111px;top:425px;width:10px;height:11px"><svg width="10" height="11" viewBox="0 0 10 11"><path d="M0 2.3 H4.8 Q6.3 2.3 6.3 3.8 V6.5" fill="none" stroke="#1A72F0" stroke-width="2.8"/><path d="M2.2 6 L9.8 6 L6 10 Z" fill="#1A72F0"/></svg></div>
<div style="left:104px;top:442px;width:125px;height:38px;background:#FFFDD5"></div>
<div style="left:230px;top:442px;width:47px;height:38px;background:#FFFDD5"></div>
<div style="left:278px;top:442px;width:63px;height:38px;background:#FFFDD5"></div>
<div style="left:342px;top:442px;width:152px;height:38px;background:#FFFDD5"></div>
<div style="left:495px;top:442px;width:156px;height:38px;background:#FFFDD5"></div>
<div style="left:652px;top:442px;width:58px;height:38px;background:#FFFDD5"></div>
<div style="left:711px;top:442px;width:58px;height:38px;background:#FFFDD5"></div>
<div style="left:770px;top:442px;width:20px;height:38px;background:#FFFDD5"></div>
<div style="left:791px;top:442px;width:38px;height:38px;background:#FFFDD5"></div>
<div style="left:830px;top:442px;width:76px;height:38px;background:#FFFDD5"></div>
<div style="left:907px;top:442px;width:51px;height:38px;background:#FFFDD5"></div>
<div style="left:959px;top:442px;width:70px;height:38px;background:#FFFDD5"></div>
<div style="left:1030px;top:442px;width:119px;height:38px;background:#FFFDD5"></div>
<div style="left:1150px;top:442px;width:151px;height:38px;background:#FFFDD5"></div>
<div style="left:104px;top:480px;width:1200px;height:1px;background:#D0D0CC"></div>
<div style="left:105px;top:450px;width:11px;height:11px;border:1px solid #1C5180;background:linear-gradient(135deg,#DCDCD7,#FFFFFF)"></div>
<div class="t" style="left:119px;top:444px;letter-spacing:0.75px"><u>grab</u><span class="sep" style="margin:0 6px 0 5px;background:#A8A8A0"></span><u>edit</u><span class="sep" style="margin:0 6px 0 5px;background:#A8A8A0"></span><u>send</u></div>
<div class="t" style="left:108px;top:462px;"><span class="sep" style="margin:0 5px 0 0;background:#A8A8A0"></span><u>000175</u></div>
<div class="t" style="left:231px;top:453px;">--</div>
<div class="t" style="left:343px;top:453px;letter-spacing:0.08px"><u>Medical, Informatics Eng.</u></div>
<div class="t" style="left:496px;top:444px;letter-spacing:0.15px"><u>Heart</u>, <u>William</u>, <u>S.</u>,</div>
<div class="t" style="left:496px;top:462px;"><u>09-08-1929</u></div>
<div class="t" style="left:712px;top:453px;letter-spacing:-0.25px">00:00:03</div>
<div class="t" style="left:771px;top:453px;">0</div>
<div class="t" style="left:831px;top:444px;">MIE-SW</div>
<div class="t" style="left:831px;top:462px;">Office</div>
<div class="t" style="left:908px;top:453px;letter-spacing:0.4px">Pending</div>
<div class="t" style="left:1031px;top:444px;">03/04/2007 at</div>
<div class="t" style="left:1031px;top:462px;">04:38pm</div>
<div class="t" style="left:1151px;top:453px;">03/04/2007</div>
<div style="left:104px;top:482px;width:125px;height:38px;background:#FFFDD5"></div>
<div style="left:230px;top:482px;width:47px;height:38px;background:#FFFDD5"></div>
<div style="left:278px;top:482px;width:63px;height:38px;background:#FFFDD5"></div>
<div style="left:342px;top:482px;width:152px;height:38px;background:#FFFDD5"></div>
<div style="left:495px;top:482px;width:156px;height:38px;background:#FFFDD5"></div>
<div style="left:652px;top:482px;width:58px;height:38px;background:#FFFDD5"></div>
<div style="left:711px;top:482px;width:58px;height:38px;background:#FFFDD5"></div>
<div style="left:770px;top:482px;width:20px;height:38px;background:#FFFDD5"></div>
<div style="left:791px;top:482px;width:38px;height:38px;background:#FFFDD5"></div>
<div style="left:830px;top:482px;width:76px;height:38px;background:#FFFDD5"></div>
<div style="left:907px;top:482px;width:51px;height:38px;background:#FFFDD5"></div>
<div style="left:959px;top:482px;width:70px;height:38px;background:#FFFDD5"></div>
<div style="left:1030px;top:482px;width:119px;height:38px;background:#FFFDD5"></div>
<div style="left:1150px;top:482px;width:151px;height:38px;background:#FFFDD5"></div>
<div style="left:104px;top:520px;width:1200px;height:1px;background:#D0D0CC"></div>
<div style="left:105px;top:490px;width:11px;height:11px;border:1px solid #1C5180;background:linear-gradient(135deg,#DCDCD7,#FFFFFF)"></div>
<div class="t" style="left:119px;top:484px;letter-spacing:0.75px"><u>grab</u><span class="sep" style="margin:0 6px 0 5px;background:#A8A8A0"></span><u>edit</u><span class="sep" style="margin:0 6px 0 5px;background:#A8A8A0"></span><u>send</u></div>
<div class="t" style="left:108px;top:502px;"><span class="sep" style="margin:0 5px 0 0;background:#A8A8A0"></span><u>000174</u></div>
<div class="t" style="left:231px;top:493px;">--</div>
<div class="t" style="left:343px;top:493px;letter-spacing:0.08px"><u>Medical, Informatics Eng.</u></div>
<div class="t" style="left:496px;top:484px;letter-spacing:0.15px"><u>Heart</u>, <u>William</u>, <u>S.</u>,</div>
<div class="t" style="left:496px;top:502px;"><u>09-08-1929</u></div>
<div class="t" style="left:712px;top:493px;letter-spacing:-0.25px">00:00:02</div>
<div class="t" style="left:771px;top:493px;">0</div>
<div class="t" style="left:831px;top:484px;">MIE-SW</div>
<div class="t" style="left:831px;top:502px;">Office</div>
<div class="t" style="left:908px;top:493px;letter-spacing:0.4px">Pending</div>
<div class="t" style="left:1031px;top:484px;">03/04/2007 at</div>
<div class="t" style="left:1031px;top:502px;">04:36pm</div>
<div class="t" style="left:1151px;top:493px;">03/04/2007</div>
<div style="left:104px;top:522px;width:125px;height:38px;background:#FFFDD5"></div>
<div style="left:230px;top:522px;width:47px;height:38px;background:#FFFDD5"></div>
<div style="left:278px;top:522px;width:63px;height:38px;background:#FFFDD5"></div>
<div style="left:342px;top:522px;width:152px;height:38px;background:#FFFDD5"></div>
<div style="left:495px;top:522px;width:156px;height:38px;background:#FFFDD5"></div>
<div style="left:652px;top:522px;width:58px;height:38px;background:#FFFDD5"></div>
<div style="left:711px;top:522px;width:58px;height:38px;background:#FFFDD5"></div>
<div style="left:770px;top:522px;width:20px;height:38px;background:#FFFDD5"></div>
<div style="left:791px;top:522px;width:38px;height:38px;background:#FFFDD5"></div>
<div style="left:830px;top:522px;width:76px;height:38px;background:#FFFDD5"></div>
<div style="left:907px;top:522px;width:51px;height:38px;background:#FFFDD5"></div>
<div style="left:959px;top:522px;width:70px;height:38px;background:#FFFDD5"></div>
<div style="left:1030px;top:522px;width:119px;height:38px;background:#FFFDD5"></div>
<div style="left:1150px;top:522px;width:151px;height:38px;background:#FFFDD5"></div>
<div style="left:104px;top:560px;width:1200px;height:1px;background:#D0D0CC"></div>
<div style="left:105px;top:530px;width:11px;height:11px;border:1px solid #1C5180;background:linear-gradient(135deg,#DCDCD7,#FFFFFF)"></div>
<div class="t" style="left:119px;top:524px;letter-spacing:0.75px"><u>grab</u><span class="sep" style="margin:0 6px 0 5px;background:#A8A8A0"></span><u>edit</u><span class="sep" style="margin:0 6px 0 5px;background:#A8A8A0"></span><u>send</u></div>
<div class="t" style="left:108px;top:542px;"><span class="sep" style="margin:0 5px 0 0;background:#A8A8A0"></span><u>000173</u></div>
<div class="t" style="left:231px;top:533px;">--</div>
<div class="t" style="left:343px;top:533px;letter-spacing:0.08px"><u>Medical, Informatics Eng.</u></div>
<div class="t" style="left:496px;top:524px;letter-spacing:0.15px"><u>Heart</u>, <u>William</u>, <u>S.</u>,</div>
<div class="t" style="left:496px;top:542px;"><u>09-08-1929</u></div>
<div class="t" style="left:712px;top:533px;letter-spacing:-0.25px">00:00:02</div>
<div class="t" style="left:771px;top:533px;">0</div>
<div class="t" style="left:831px;top:524px;">MIE-SW</div>
<div class="t" style="left:831px;top:542px;">Office</div>
<div class="t" style="left:908px;top:533px;letter-spacing:0.4px">Pending</div>
<div class="t" style="left:1031px;top:524px;">03/04/2007 at</div>
<div class="t" style="left:1031px;top:542px;">04:36pm</div>
<div class="t" style="left:1151px;top:533px;">03/04/2007</div>
<div style="left:104px;top:562px;width:125px;height:38px;background:#FFFDD5"></div>
<div style="left:230px;top:562px;width:47px;height:38px;background:#FFFDD5"></div>
<div style="left:278px;top:562px;width:63px;height:38px;background:#FFFDD5"></div>
<div style="left:342px;top:562px;width:152px;height:38px;background:#FFFDD5"></div>
<div style="left:495px;top:562px;width:156px;height:38px;background:#FFFDD5"></div>
<div style="left:652px;top:562px;width:58px;height:38px;background:#FFFDD5"></div>
<div style="left:711px;top:562px;width:58px;height:38px;background:#FFFDD5"></div>
<div style="left:770px;top:562px;width:20px;height:38px;background:#FFFDD5"></div>
<div style="left:791px;top:562px;width:38px;height:38px;background:#FFFDD5"></div>
<div style="left:830px;top:562px;width:76px;height:38px;background:#FFFDD5"></div>
<div style="left:907px;top:562px;width:51px;height:38px;background:#FFFDD5"></div>
<div style="left:959px;top:562px;width:70px;height:38px;background:#FFFDD5"></div>
<div style="left:1030px;top:562px;width:119px;height:38px;background:#FFFDD5"></div>
<div style="left:1150px;top:562px;width:151px;height:38px;background:#FFFDD5"></div>
<div style="left:104px;top:600px;width:1200px;height:1px;background:#D0D0CC"></div>
<div style="left:105px;top:570px;width:11px;height:11px;border:1px solid #1C5180;background:linear-gradient(135deg,#DCDCD7,#FFFFFF)"></div>
<div class="t" style="left:119px;top:564px;letter-spacing:0.75px"><u>grab</u><span class="sep" style="margin:0 6px 0 5px;background:#A8A8A0"></span><u>edit</u><span class="sep" style="margin:0 6px 0 5px;background:#A8A8A0"></span><u>send</u></div>
<div class="t" style="left:496px;top:564px;letter-spacing:0.15px"><u>Heart</u>, <u>William</u>, <u>S.</u>,</div>
<div class="t" style="left:831px;top:564px;">MIE-SW</div>
<div class="t" style="left:1031px;top:564px;">03/04/2007 at</div>
</body></html>
